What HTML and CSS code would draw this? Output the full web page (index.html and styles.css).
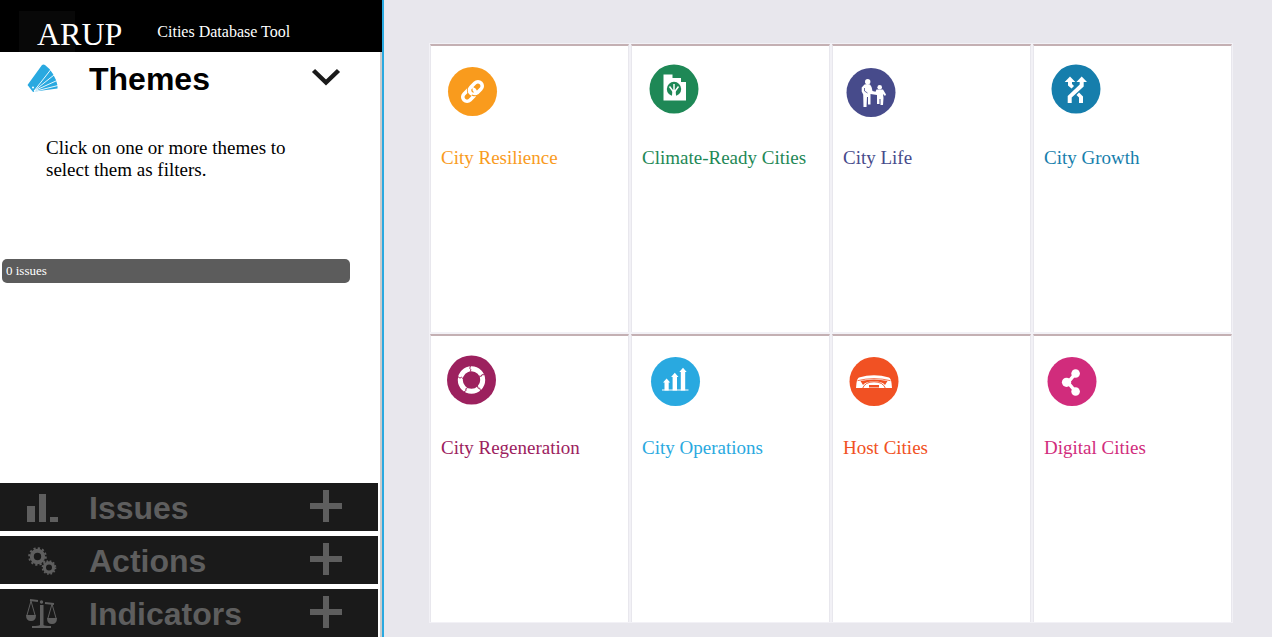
FILE: index.html
```html
<!DOCTYPE html>
<html lang="en">
<head>
<meta charset="utf-8">
<title>Cities Database Tool</title>
<link rel="stylesheet" href="styles.css">
</head>
<body>
<div class="app">
  <aside class="sidebar">
    <header class="brand">
      <span class="brand-name">ARUP</span>
      <span class="brand-tool">Cities Database Tool</span>
    </header>
    <div class="filters">
      <section class="open-section">
        <button class="section-toggle open" type="button" aria-expanded="true">
          <svg class="section-icon" viewBox="0 0 32 32" aria-hidden="true">
            <path fill="#29a9e0" d="M1.500 22 16 2q1.500-1 3 0l4.500 4 3.500 5 3 6 1.500 5.500v3L9 28.500 7 29z"/>
            <path stroke="#fff" stroke-width=".9" fill="none" d="M8 28 24.500 7M8 28 28 12M8 28 31 17.500M8 28.500 32 22.500"/>
            <circle cx="7" cy="24.500" r="1" fill="#fff"/>
          </svg>
          <span class="section-name">Themes</span>
          <svg class="section-state" viewBox="0 0 32 32" aria-hidden="true"><path d="M3.500 9.500 16 21.500 28.500 9.500" fill="none" stroke="#1a1a1a" stroke-width="4.500"/></svg>
        </button>
        <p class="hint">Click on one or more themes to select them as filters.</p>
        <div class="count">0 issues</div>
      </section>
      <nav class="sections">
        <button class="section-toggle" type="button" aria-expanded="false">
          <svg class="section-icon" viewBox="0 0 32 32" aria-hidden="true"><path fill="#5e5e5e" d="M1 14h8v16H1zM13 2h7v28h-7zM24 25h8v5h-8z"/></svg>
          <span class="section-name">Issues</span>
          <svg class="section-state" viewBox="0 0 32 32" aria-hidden="true"><path class="plus" d="M13 0h6v13h13v6H19v13h-6V19H0v-6h13z"/></svg>
        </button>
        <button class="section-toggle" type="button" aria-expanded="false">
          <svg class="section-icon" viewBox="0 0 32 32" aria-hidden="true">
            <g fill="none" stroke="#5e5e5e">
              <circle cx="11.500" cy="11.500" r="5.700" stroke-width="4"/>
              <circle cx="11.500" cy="11.500" r="8.300" stroke-width="2" stroke-dasharray="2.200 2.150"/>
              <circle cx="23" cy="22.500" r="4.600" stroke-width="3.200"/>
              <circle cx="23" cy="22.500" r="6.500" stroke-width="1.700" stroke-dasharray="1.700 1.700"/>
            </g>
          </svg>
          <span class="section-name">Actions</span>
          <svg class="section-state" viewBox="0 0 32 32" aria-hidden="true"><path class="plus" d="M13 0h6v13h13v6H19v13h-6V19H0v-6h13z"/></svg>
        </button>
        <button class="section-toggle" type="button" aria-expanded="false">
          <svg class="section-icon" viewBox="0 0 32 32" aria-hidden="true">
            <g fill="#5e5e5e">
              <path d="M14 7h3.500v20q1 1 7.500 1v2H6v-2q7 0 8-1z"/>
              <circle cx="15.500" cy="4" r="1.700"/>
              <path d="M0 17h10q0 6-5 6t-5-6zM21 20h10q0 6-5 6t-5-6z"/>
            </g>
            <g fill="none" stroke="#5e5e5e">
              <path stroke-width="2" d="m4 2 8 1M19 5l9 1"/>
              <path d="M5 3 1 17M5 3l4 14M26 6l-4 14M26 6l4 14"/>
            </g>
          </svg>
          <span class="section-name">Indicators</span>
          <svg class="section-state" viewBox="0 0 32 32" aria-hidden="true"><path class="plus" d="M13 0h6v13h13v6H19v13h-6V19H0v-6h13z"/></svg>
        </button>
      </nav>
    </div>
  </aside>

  <main class="themes">
    <button class="card resilience" type="button">
      <svg class="art" viewBox="0 0 80 80" aria-hidden="true">
        <g transform="translate(41.500 45.500)">
          <circle r="24.500" fill="currentColor"/>
          <g transform="rotate(-45)" fill="none" stroke="#fff" stroke-width="3.600">
            <rect x="-12" y="-4.300" width="14.500" height="8.600" rx="4.300"/>
            <path stroke="currentColor" stroke-width="5.600" d="M4-4.300h2.500M2-4.300a4.300 4.300 0 0 0-4.300 4.300"/>
            <rect x="-2.500" y="-4.300" width="14.500" height="8.600" rx="4.300"/>
            <path stroke="currentColor" stroke-width="1" d="M-3 2q1.500 4 5 4.600"/>
          </g>
        </g>
      </svg>
      <span class="card-name">City Resilience</span>
    </button>
    <button class="card climate" type="button">
      <svg class="art" viewBox="0 0 80 80" aria-hidden="true">
        <g transform="translate(42 43)">
          <circle r="24.500" fill="currentColor"/>
          <path fill="#fff" d="M-10.500-14.500h9v3.500H7v4h5v18.500h-22.500z"/>
          <circle r="7.200" fill="currentColor"/>
          <path fill="none" stroke="#fff" stroke-width="1.500" d="M0-5V7M-4.500-2.500-.5 3M4.500-2.500.5 3"/>
          <path fill="#fff" d="M-1.500 1h3l1 10h-5z"/>
        </g>
      </svg>
      <span class="card-name">Climate-Ready Cities</span>
    </button>
    <button class="card life" type="button">
      <svg class="art" viewBox="0 0 80 80" aria-hidden="true">
        <g transform="translate(38 46.500)">
          <circle r="24.500" fill="currentColor"/>
          <g fill="#fff">
            <circle cx="-3.300" cy="-10.800" r="2.700"/>
            <path d="M-6.500-8q3-1 5.500 0Q1-6 1.500-1.500L4.500-.8 5.500-3h6.500l3 5-1 1.500-2-2 .5 4-.5 7H9.500V6.500h-1V11.500H6V2.500L-.5 1.500V12h-2.500V4.500h-1L-4.500 14.500H-7.500L-7.800 2l-1.500-3v-4z"/>
            <circle cx="8.700" cy="-5.300" r="2.300"/>
          </g>
          <path d="M-6.500-4.500v3l3 2" fill="none" stroke="currentColor" stroke-width=".8"/>
        </g>
      </svg>
      <span class="card-name">City Life</span>
    </button>
    <button class="card growth" type="button">
      <svg class="art" viewBox="0 0 80 80" aria-hidden="true">
        <g transform="translate(42 43)">
          <circle r="24.500" fill="currentColor"/>
          <path fill="#fff" d="M-8-9h4v4l2 2-2.500 2.500L-8-3.500zM3 14V8.500L.5 6 3 3.500l4 4V14z"/>
          <path fill="#fff" d="M3.700-9h4v6.500L-4.300 8.500V14h-4V7L3.700-4.500z"/>
          <path fill="#fff" d="m-6-12.500 5.300 5.500h-10.600zM5.700-12.500 11-7H.4z"/>
        </g>
      </svg>
      <span class="card-name">City Growth</span>
    </button>
    <button class="card regeneration" type="button">
      <svg class="art" viewBox="0 0 80 80" aria-hidden="true">
        <g transform="translate(40.500 44)">
          <circle r="24.500" fill="currentColor"/>
          <circle r="11.200" fill="none" stroke="#fff" stroke-width="5"/>
          <g fill="none" stroke="currentColor" stroke-width=".9">
            <path id="split" d="m-1-14-.8 2.500 1.300 1-1 2.500"/>
            <use href="#split" transform="rotate(72)"/>
            <use href="#split" transform="rotate(144)"/>
            <use href="#split" transform="rotate(216)"/>
            <use href="#split" transform="rotate(288)"/>
          </g>
        </g>
      </svg>
      <span class="card-name">City Regeneration</span>
    </button>
    <button class="card operations" type="button">
      <svg class="art" viewBox="0 0 80 80" aria-hidden="true">
        <g transform="translate(43.500 45.500)">
          <circle r="24.500" fill="currentColor"/>
          <path fill="#fff" d="M-11 9V1H-12.500l3.600-4L-5.300 1H-6.800v8zM-2.900 9v-13.500H-4.400L-.7-8.800 3-4.500H1.500V9zM5.300 9v-18.500H3.800l3.700-4.200 3.700 4.200H9.700V9z"/>
          <path stroke="#fff" d="M-13.500 8.500h26.500"/>
        </g>
      </svg>
      <span class="card-name">City Operations</span>
    </button>
    <button class="card host" type="button">
      <svg class="art" viewBox="0 0 80 80" aria-hidden="true">
        <g transform="translate(41 45.500)">
          <circle r="24.500" fill="currentColor"/>
          <path fill="#fff" d="M-15-4Q0-8.500 15-4q2 1 2.500 5.500L18 6.500H-18l.5-5q.5-4.500 2.500-5.500z"/>
          <path fill="none" stroke="currentColor" stroke-width=".8" d="M-16.500-.8Q0-5 16.500-.8"/>
          <path fill="currentColor" d="M-13.500-.5Q0-3.500 13.500-.5L11 3.500Q8-.2 0-.2T-11 3.500z"/>
          <path fill="none" stroke="currentColor" stroke-width=".9" d="M-11.500 7Q-9 .3 0 .3T11.500 7"/>
          <path fill="currentColor" d="M-5 3.500H5V6H-5z"/>
        </g>
      </svg>
      <span class="card-name">Host Cities</span>
    </button>
    <button class="card digital" type="button">
      <svg class="art" viewBox="0 0 80 80" aria-hidden="true">
        <g transform="translate(38 45.500)">
          <circle r="24.500" fill="currentColor"/>
          <path fill="none" stroke="#fff" stroke-width="3.500" d="M3.500-8-4 1l7.500 9"/>
          <g fill="#fff"><circle cx="-5.500" cy=".8" r="4.600"/><circle cx="3.600" cy="-8" r="4.300"/><circle cx="3.600" cy="10" r="4.300"/></g>
        </g>
      </svg>
      <span class="card-name">Digital Cities</span>
    </button>
  </main>
</div>
</body>
</html>
```

FILE: styles.css
```css
* {
  box-sizing: border-box;
}

body {
  margin: 0;
  background: #e8e7ed;
  font-family: "Liberation Serif", serif;
}

button {
  margin: 0;
  border: 0;
  font: inherit;
  text-align: left;
  cursor: pointer;
}

.app {
  display: flex;
  min-height: 100vh;
}

.sidebar {
  display: flex;
  flex-direction: column;
  flex: 0 0 384px;
  border-right: 2px solid #29a9e0;
  background: #fff;
}

.brand {
  display: flex;
  align-items: center;
  gap: 35px;
  padding: 11px 19px 0;
  background: #000;
  color: #fff;
}

.brand-name {
  padding: 5px 0 0 18px;
  background: linear-gradient(#080808, #080808) no-repeat 0 0 / 56px 100%;
  font-size: 32px;
  line-height: 36px;
}

.brand-tool {
  font-size: 16px;
  line-height: 20px;
}

.filters {
  display: flex;
  flex: 1;
  flex-direction: column;
  justify-content: space-between;
  padding-right: 2px;
  border-right: 2px solid #ccc;
}

.section-toggle {
  display: grid;
  grid-template-columns: 32px 1fr 32px;
  align-items: center;
  column-gap: 31px;
  width: 100%;
  height: 48px;
  padding: 2px 36px 0 26px;
  background: #1a1a1a;
  color: #5e5e5e;
}

.section-toggle.open {
  height: 52px;
  background: #fff;
  color: #000;
}

.section-icon,
.section-state {
  display: block;
  width: 32px;
  height: 32px;
}

.section-state {
  margin-bottom: 4px;
}

.section-name {
  font: bold 32px/40px "Liberation Sans", sans-serif;
}

.plus {
  fill: #5e5e5e;
}

.hint {
  margin: 33px 76px 0 46px;
  font-size: 19px;
  line-height: 22px;
}

.count {
  margin: 78px 28px 0 2px;
  padding: 4px;
  border-radius: 5px;
  background: #5c5c5c;
  color: #fff;
  font-size: 13px;
  line-height: 16px;
}

.sections {
  display: grid;
  gap: 5px;
}

.themes {
  display: grid;
  flex: 1;
  grid-template-columns: repeat(4, 1fr);
  grid-auto-rows: 288px;
  align-content: start;
  gap: 2px;
  padding: 44px 40px 15px 46px;
}

.card {
  display: flex;
  flex-direction: column;
  align-items: flex-start;
  gap: 21px;
  padding: 0;
  border: 1px solid #e8e7ed;
  border-top: 2px solid #c4b0b3;
  border-bottom: 0;
  background: #fff;
  box-shadow: 0 0 0 1px #f2f1f6;
}

.art {
  display: block;
  width: 80px;
  height: 80px;
}

.card-name {
  padding-left: 10px;
  font-size: 19px;
  line-height: 22px;
}

.resilience { color: #f99b1d; }
.climate { color: #1e8856; }
.life { color: #474b8b; }
.growth { color: #167eac; }
.regeneration { color: #9c215e; }
.operations { color: #29a9e0; }
.host { color: #f15123; }
.digital { color: #d12c7c; }
```
